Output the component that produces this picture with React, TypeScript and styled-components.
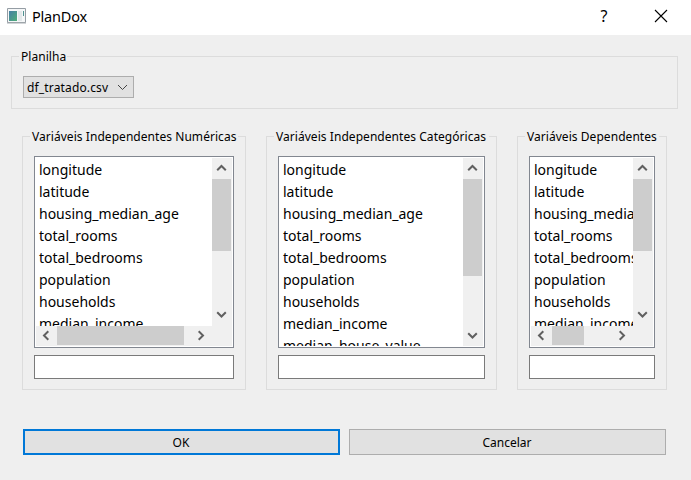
import React from "react";
import styled, { createGlobalStyle } from "styled-components";

const GlobalStyle = createGlobalStyle`
  * { box-sizing: border-box; }
  body { margin: 0; background: #efefef; }
`;

const Dialog = styled.div`
  width: 691px;
  height: 480px;
  display: flex;
  flex-direction: column;
  background: #efefef;
  color: #000;
  font: 12px/17px "Noto Sans", sans-serif;
  overflow: hidden;
`;

const TitleBar = styled.header`
  height: 35px;
  flex: none;
  display: flex;
  align-items: center;
  padding: 0 23px 0 7px;
  background: #fff;
`;

const Title = styled.h1`
  flex: 1;
  margin: 0 0 3px 6px;
  font: 400 14.5px/20px "Noto Sans", sans-serif;
  letter-spacing: -0.2px;
`;

const WindowButton = styled.button`
  border: 0;
  padding: 0;
  margin: 0 0 3px;
  background: none;
  color: #000;
  display: flex;
  width: 14px;
  height: 14px;
  align-items: center;
  justify-content: center;
  font: 16px/14px "Noto Sans", sans-serif;
  & + & { margin-left: 43px; }
`;

const AppIcon = styled.svg`
  display: block;
  margin-bottom: 3px;
`;

const Body = styled.main`
  flex: 1;
  display: flex;
  flex-direction: column;
  padding: 13px 13px 25px 11px;
`;

const GroupBox = styled.fieldset<{ $width: number; $height: number }>`
  width: ${(p) => p.$width}px;
  height: ${(p) => p.$height}px;
  min-width: 0;
  margin: 0;
  padding: 11px 11px 10px;
  border: 1px solid #dcdcdc;
`;

const Legend = styled.legend<{ $width: number }>`
  width: ${(p) => p.$width}px;
  height: 17px;
  margin-left: -4px;
  padding: 0 0 0 2px;
  white-space: nowrap;
  letter-spacing: 0.05px;
`;

const Combo = styled.button`
  width: 111px;
  height: 22px;
  display: flex;
  align-items: center;
  justify-content: space-between;
  padding: 1px 5px 0 3px;
  border: 1px solid #adadad;
  background: #e1e1e1;
  color: #000;
  font: 12px/18px "Noto Sans", sans-serif;
  letter-spacing: 0.15px;
`;

const Groups = styled.div`
  display: flex;
  gap: 20px;
  margin: 19px 0 0 11px;
`;

const ListBox = styled.div<{ $horizontal: boolean }>`
  height: 192px;
  display: grid;
  grid-template-columns: minmax(0, 1fr) 20px;
  grid-template-rows: minmax(0, 1fr) ${(p) => (p.$horizontal ? "20px" : "")};
  padding: 1px;
  border: 1px solid #828790;
  background: #fff;
`;

const Items = styled.ul`
  margin: 0;
  padding: 1px 0 0 3px;
  list-style: none;
  overflow: hidden;
`;

const Item = styled.li`
  height: 22px;
  font: 14px/22px "Noto Sans", sans-serif;
  white-space: nowrap;
`;

const VerticalBar = styled.div<{ $inset: number }>`
  display: flex;
  flex-direction: column;
  justify-content: space-between;
  padding-bottom: ${(p) => p.$inset}px;
  background: #f0f0f0;
`;

const HorizontalBar = styled.div`
  display: flex;
  justify-content: space-between;
  padding-right: 1px;
  background: #f0f0f0;
`;

const Corner = styled.div`
  background: #f0f0f0;
`;

const VerticalThumb = styled.div<{ $size: number }>`
  width: 19px;
  height: ${(p) => p.$size}px;
  margin-bottom: auto;
  background: #cdcdcd;
`;

const HorizontalThumb = styled.div<{ $size: number }>`
  width: ${(p) => p.$size}px;
  height: 19px;
  margin-right: auto;
  background: #cdcdcd;
`;

const VerticalArrow = styled.div`
  width: 19px;
  height: 21px;
  display: flex;
  align-items: center;
  justify-content: center;
`;

const HorizontalArrow = styled.div`
  width: 21px;
  height: 19px;
  display: flex;
  align-items: center;
  justify-content: center;
`;

const LineEdit = styled.input`
  display: block;
  width: 100%;
  height: 24px;
  margin: 7px 0 0;
  padding: 0 3px;
  border: 1px solid #7a7a7a;
  border-radius: 0;
  background: #fff;
`;

const Actions = styled.footer`
  display: flex;
  gap: 9px;
  margin: 39px 0 0 12px;
`;

const ActionButton = styled.button<{ $primary?: boolean }>`
  width: 317px;
  height: 26px;
  padding: 2px 1px 0 0;
  border: ${(p) => (p.$primary ? "2px solid #0078d7" : "1px solid #adadad")};
  background: #e1e1e1;
  color: #000;
  font: 12px/20px "Noto Sans", sans-serif;
`;

const arrowPaths = {
  up: "M1.2 7.3 5.5 3 9.8 7.3",
  down: "M1.2 3.2 5.5 7.5 9.8 3.2",
  left: "M7.3 1.2 3 5.5 7.3 9.8",
  right: "M3.7 1.2 8 5.5 3.7 9.8",
};

const Arrow = ({ to }: { to: keyof typeof arrowPaths }) => (
  <svg width="11" height="11" viewBox="0 0 11 11">
    <path d={arrowPaths[to]} fill="none" stroke="#606060" strokeWidth="2" />
  </svg>
);

const columns = [
  "longitude",
  "latitude",
  "housing_median_age",
  "total_rooms",
  "total_bedrooms",
  "population",
  "households",
  "median_income",
  "median_house_value",
];

const groups = [
  { title: "Variáveis Independentes Numéricas", width: 224, legend: 208, vertical: 72, horizontal: 127 },
  { title: "Variáveis Independentes Categóricas", width: 231, legend: 215, vertical: 97, horizontal: 0 },
  { title: "Variáveis Dependentes", width: 150, legend: 134, vertical: 72, horizontal: 32 },
];

export default function App() {
  return (
    <Dialog>
      <GlobalStyle />
      <TitleBar>
        <AppIcon width="19" height="16" viewBox="0 0 19 16">
          <defs>
            <linearGradient id="pane" x1="0" y1="0" x2="1" y2="1">
              <stop offset="0" stopColor="#467fa5" />
              <stop offset="1" stopColor="#4fae79" />
            </linearGradient>
          </defs>
          <path d="M.5 .5h18v14H.5z" fill="#f5f7f8" stroke="#959da4" />
          <path d="M2 3h8v10H2z" fill="url(#pane)" />
          <path d="M11 3h4v10h-4z" fill="#e3e8ea" />
          <path d="M16.5 3v5" stroke="#4e9291" />
          <path d="M0 15h19" stroke="#a6acb1" />
        </AppIcon>
        <Title>PlanDox</Title>
        <WindowButton aria-label="Ajuda">?</WindowButton>
        <WindowButton aria-label="Fechar">
          <svg width="14" height="14" viewBox="0 0 14 14">
            <path d="m1 1 12 12M13 1 1 13" stroke="#000" strokeWidth="1.1" />
          </svg>
        </WindowButton>
      </TitleBar>
      <Body>
        <GroupBox $width={667} $height={61}>
          <Legend $width={48}>Planilha</Legend>
          <Combo>
            df_tratado.csv
            <svg width="11" height="7" viewBox="0 0 11 7">
              <path d="m1 1 4.5 4.5L10 1" fill="none" stroke="#444" />
            </svg>
          </Combo>
        </GroupBox>
        <Groups>
          {groups.map((g) => (
            <GroupBox key={g.title} $width={g.width} $height={262}>
              <Legend $width={g.legend}>{g.title}</Legend>
              <ListBox $horizontal={g.horizontal > 0}>
                <Items>
                  {columns.map((c) => (
                    <Item key={c}>{c}</Item>
                  ))}
                </Items>
                <VerticalBar $inset={g.horizontal > 0 ? 1 : 0}>
                  <VerticalArrow><Arrow to="up" /></VerticalArrow>
                  <VerticalThumb $size={g.vertical} />
                  <VerticalArrow><Arrow to="down" /></VerticalArrow>
                </VerticalBar>
                {g.horizontal > 0 && (
                  <>
                    <HorizontalBar>
                      <HorizontalArrow><Arrow to="left" /></HorizontalArrow>
                      <HorizontalThumb $size={g.horizontal} />
                      <HorizontalArrow><Arrow to="right" /></HorizontalArrow>
                    </HorizontalBar>
                    <Corner />
                  </>
                )}
              </ListBox>
              <LineEdit />
            </GroupBox>
          ))}
        </Groups>
        <Actions>
          <ActionButton $primary>OK</ActionButton>
          <ActionButton>Cancelar</ActionButton>
        </Actions>
      </Body>
    </Dialog>
  );
}
